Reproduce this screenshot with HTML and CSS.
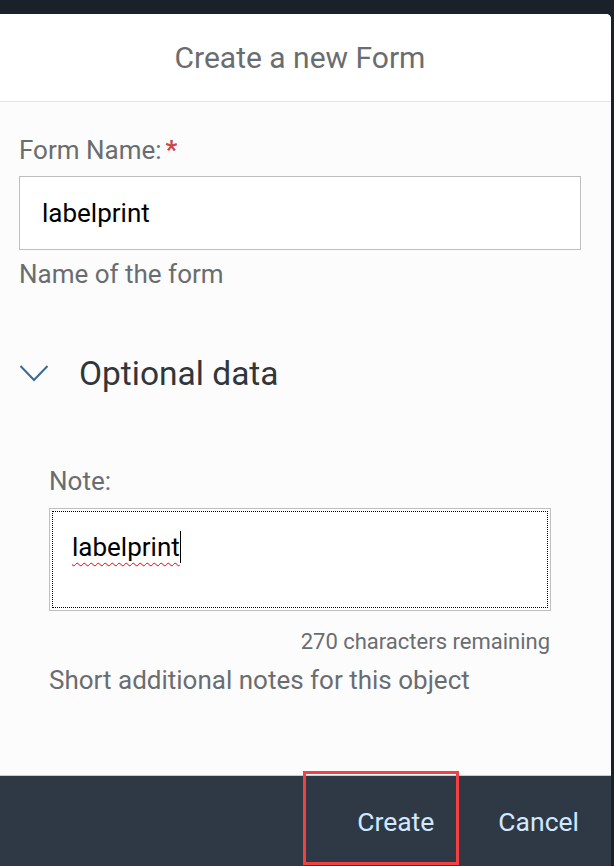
FILE: index.html
```html
<!DOCTYPE html>
<html lang="en">
<head>
<meta charset="utf-8">
<title>Create a new Form</title>
<link rel="stylesheet" href="styles.css">
</head>
<body>
<div class="page">
  <div class="dialog">
    <header class="dlg-header"><h1 class="dlg-title">Create a new Form</h1></header>
    <main class="dlg-content">
      <div class="field">
        <label class="label">Form Name:<span class="req">*</span></label>
        <div class="input"><span class="input-text">labelprint</span></div>
        <div class="hint">Name of the form</div>
      </div>
      <div class="panel">
        <div class="panel-header">
          <svg class="chevron" width="30" height="18" viewBox="0 0 30 18"><path d="M1.5 2 L15 16 L28.5 2" fill="none" stroke="#3b6a93" stroke-width="2"/></svg>
          <span class="panel-title">Optional data</span>
        </div>
        <div class="panel-content">
          <label class="label">Note:</label>
          <div class="textarea"><span class="ta-text">labelprint</span><span class="caret"></span></div>
          <div class="counter">270 characters remaining</div>
          <div class="hint">Short additional notes for this object</div>
        </div>
      </div>
    </main>
    <footer class="dlg-footer">
      <button class="btn">Create</button>
      <button class="btn">Cancel</button>
      <div class="highlight"></div>
    </footer>
  </div>
</div>
</body>
</html>
```
FILE: styles.css
```css
html, body { margin: 0; padding: 0; }
body {
  background: #1b2129;
  font-family: Roboto, "Liberation Sans", sans-serif;
  width: 614px;
  height: 866px;
  overflow: hidden;
}
.page {
  padding: 14px 3px 0 0;
  height: 852px;
}
.dialog {
  background: #fcfcfc;
  border-top-right-radius: 5px;
  height: 852px;
  display: flex;
  flex-direction: column;
  position: relative;
}
.dlg-header {
  background: #fff;
  height: 87px;
  border-bottom: 1px solid #e5e5e5;
  border-top-right-radius: 5px;
  display: flex;
  align-items: center;
  justify-content: center;
  padding-right: 11px;
}
.dlg-title {
  margin: 0;
  font-weight: 400;
  font-size: 30px;
  color: #6a6d70;
}
.dlg-content {
  flex: 1;
  padding: 34px 30px 0 19px;
}
.label {
  display: block;
  font-size: 26px;
  line-height: 28px;
  color: #6a6d70;
}
.req { color: #d04343; margin-left: 4px; font-weight: 700; }
.input {
  margin-top: 12px;
  height: 72px;
  border: 1px solid #bfbfbf;
  background: #fff;
  display: flex;
  align-items: center;
  padding-left: 22px;
}
.input-text { font-size: 26px; color: #000; }
.hint {
  margin-top: 10px;
  font-size: 26px;
  line-height: 28px;
  color: #6a6d70;
}
.panel-header {
  margin-top: 45px;
  height: 80px;
  display: flex;
  align-items: center;
  gap: 30px;
}
.chevron { display: block; }
.panel-title {
  font-size: 33.5px;
  color: #32363a;
}
.panel-content {
  padding: 54px 30px 0 30px;
}
.textarea {
  margin-top: 13px;
  height: 101px;
  border: 1px solid #bfbfbf;
  background: #fff;
  outline: 1px dotted #000;
  outline-offset: -4px;
  box-sizing: content-box;
  padding: 0 0 0 22px;
  display: flex;
  align-items: flex-start;
}
.ta-text {
  margin-top: 24px;
  font-size: 26px;
  line-height: 28px;
  color: #000;
  text-decoration: underline wavy #e00;
  text-decoration-thickness: 1px;
  text-underline-offset: 6px;
  text-decoration-skip-ink: none;
}
.caret {
  margin-top: 22px;
  width: 1px;
  height: 32px;
  background: #000;
}
.counter {
  margin-top: 19px;
  padding-right: 1px;
  text-align: right;
  font-size: 22px;
  line-height: 24px;
  color: #6a6d70;
}
.panel-content .hint { margin-top: 12px; }
.dlg-footer {
  height: 90px;
  border-top: 1px solid #c9ccd0;
  background: #2e3945;
  display: flex;
  justify-content: flex-end;
  align-items: center;
  gap: 64px;
  padding-right: 32px;
  position: relative;
}
.btn {
  background: none;
  border: 0;
  padding: 0;
  font-family: inherit;
  font-size: 26.5px;
  color: #d1e8ff;
}
.highlight {
  position: absolute;
  left: 303px;
  top: -5px;
  width: 150px;
  height: 88px;
  border: 3px solid #f44040;
}
```
